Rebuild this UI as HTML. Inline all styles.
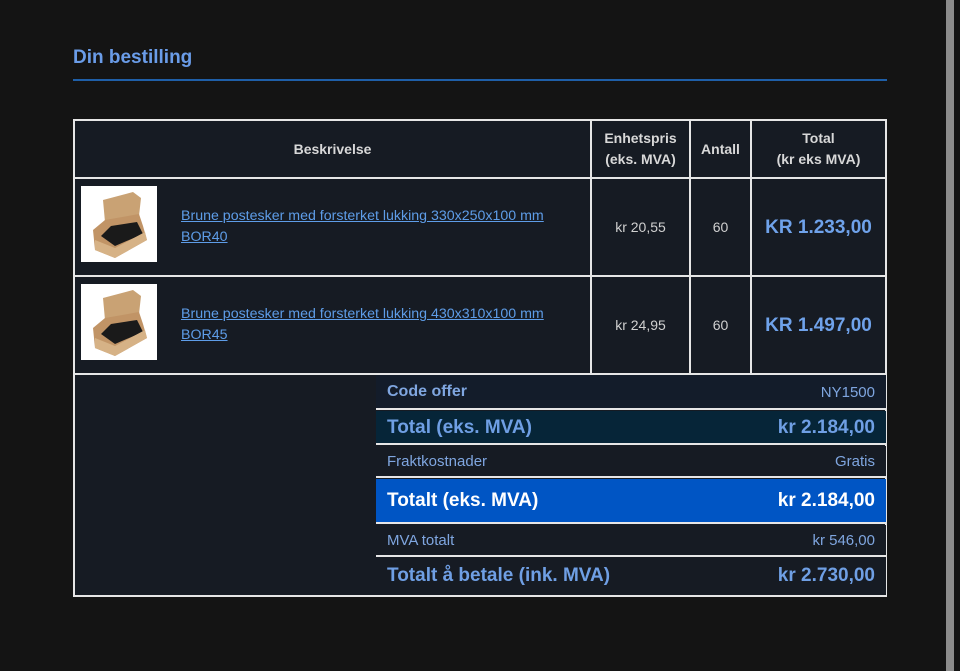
<!DOCTYPE html>
<html><head><meta charset="utf-8"><style>
*{margin:0;padding:0;box-sizing:border-box}
body{width:960px;height:671px;background:#141414;font-family:"Liberation Sans",Arial,sans-serif;position:relative;overflow:hidden}
.a{position:absolute}
.c{display:flex;align-items:center;justify-content:center;text-align:center}
.th{color:#d8d8d8;font-weight:bold;font-size:14px;line-height:21px}
.v{color:#d0d0d0;font-size:14px}
.big{color:#6fa2ea;font-weight:bold;font-size:19px}
.lnk{color:#5e9de8;text-decoration:underline;font-size:14.2px;line-height:21px}
.sr{position:absolute;left:376px;width:510px;display:flex;align-items:center;justify-content:space-between;padding:0 11px;color:#7fa6e0}
</style></head><body>
<div class="a" style="left:73px;top:47px;color:#6a9ce8;font-weight:bold;font-size:19px">Din bestilling</div>
<div class="a" style="left:73px;top:79px;width:814px;height:2px;background:#1f5fa8"></div>
<div class="a" style="left:946px;top:0;width:8px;height:671px;background:#8c8c8c"></div>

<div class="a" style="left:73px;top:119px;width:814px;height:478px;background:#161b23;border:2px solid #e6e6e6"></div>
<div class="a" style="left:73px;top:177px;width:814px;height:2px;background:#e6e6e6"></div>
<div class="a" style="left:73px;top:275px;width:814px;height:2px;background:#e6e6e6"></div>
<div class="a" style="left:73px;top:373px;width:814px;height:2px;background:#e6e6e6"></div>
<div class="a" style="left:590px;top:119px;width:2px;height:256px;background:#e6e6e6"></div>
<div class="a" style="left:689px;top:119px;width:2px;height:256px;background:#e6e6e6"></div>
<div class="a" style="left:750px;top:119px;width:2px;height:256px;background:#e6e6e6"></div>

<div class="a c th" style="left:75px;top:121px;width:515px;height:56px">Beskrivelse</div>
<div class="a c th" style="left:592px;top:121px;width:97px;height:56px">Enhetspris<br>(eks. MVA)</div>
<div class="a c th" style="left:691px;top:121px;width:59px;height:56px">Antall</div>
<div class="a c th" style="left:752px;top:121px;width:133px;height:56px">Total<br>(kr eks MVA)</div>

<svg class="a" style="left:81px;top:186px" width="76" height="76" viewBox="0 0 76 76"><rect width="76" height="76" fill="#fff"/><polygon points="22,14 52,6 60,12 58,30 24,36" fill="#c9a274"/><polygon points="12,44 24,34 58,28 62,40 66,54 34,72 14,64" fill="#c19466"/><polygon points="20,50 30,40 56,36 62,48 34,60" fill="#1a1a1a"/><polygon points="14,64 34,72 66,54 64,46 34,62 14,54" fill="#d6b286"/></svg>
<div class="a lnk" style="left:181px;top:206px">Brune postesker med forsterket lukking 330x250x100 mm<br>BOR40</div>
<div class="a c v" style="left:592px;top:179px;width:97px;height:96px">kr 20,55</div>
<div class="a c v" style="left:691px;top:179px;width:59px;height:96px">60</div>
<div class="a c big" style="left:752px;top:180px;width:133px;height:96px">KR 1.233,00</div>

<svg class="a" style="left:81px;top:284px" width="76" height="76" viewBox="0 0 76 76"><rect width="76" height="76" fill="#fff"/><polygon points="22,14 52,6 60,12 58,30 24,36" fill="#c9a274"/><polygon points="12,44 24,34 58,28 62,40 66,54 34,72 14,64" fill="#c19466"/><polygon points="20,50 30,40 56,36 62,48 34,60" fill="#1a1a1a"/><polygon points="14,64 34,72 66,54 64,46 34,62 14,54" fill="#d6b286"/></svg>
<div class="a lnk" style="left:181px;top:304px">Brune postesker med forsterket lukking 430x310x100 mm<br>BOR45</div>
<div class="a c v" style="left:592px;top:277px;width:97px;height:96px">kr 24,95</div>
<div class="a c v" style="left:691px;top:277px;width:59px;height:96px">60</div>
<div class="a c big" style="left:752px;top:278px;width:133px;height:96px">KR 1.497,00</div>

<div class="sr" style="top:375px;height:34px;background:#131c2a;font-weight:bold;font-size:16px"><span>Code offer</span><span style="font-weight:normal;font-size:15px">NY1500</span></div>
<div class="a" style="left:376px;top:408px;width:510px;height:2px;background:#e6e6e6"></div>
<div class="sr" style="top:411px;height:33px;background:#062538;font-weight:bold;font-size:19px;color:#6f9fe4"><span>Total (eks. MVA)</span><span>kr 2.184,00</span></div>
<div class="a" style="left:376px;top:443px;width:510px;height:2px;background:#e6e6e6"></div>
<div class="sr" style="top:446px;height:31px;background:#161b23;font-size:15px"><span>Fraktkostnader</span><span>Gratis</span></div>
<div class="a" style="left:376px;top:476px;width:510px;height:2px;background:#e6e6e6"></div>
<div class="sr" style="top:479px;height:44px;background:#0055c4;font-weight:bold;font-size:19px;color:#fff"><span>Totalt (eks. MVA)</span><span>kr 2.184,00</span></div>
<div class="a" style="left:376px;top:522px;width:510px;height:2px;background:#e6e6e6"></div>
<div class="sr" style="top:525px;height:31px;background:#161b23;font-size:15px"><span>MVA totalt</span><span>kr 546,00</span></div>
<div class="a" style="left:376px;top:555px;width:510px;height:2px;background:#e6e6e6"></div>
<div class="sr" style="top:557px;height:38px;background:#161b23;font-weight:bold;font-size:19px;color:#6f9fe4"><span>Totalt å betale (ink. MVA)</span><span>kr 2.730,00</span></div>
</body></html>
